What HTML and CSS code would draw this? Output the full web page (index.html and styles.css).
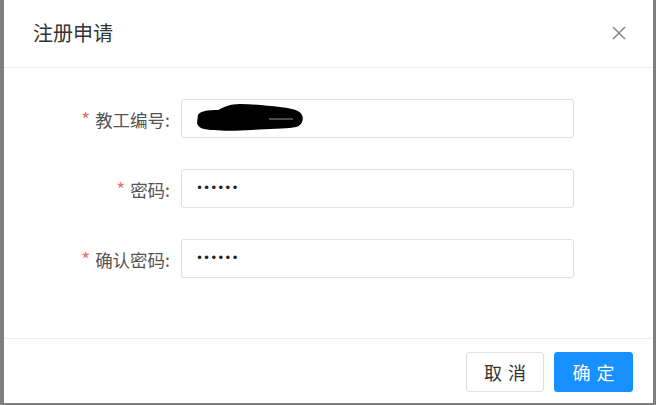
FILE: index.html
```html
<!DOCTYPE html>
<html lang="zh">
<head>
<meta charset="utf-8">
<title>注册申请</title>
<link rel="stylesheet" href="styles.css">
</head>
<body>
<div class="dialog">
  <div class="dialog-header">
    <span class="dialog-title">注册申请</span>
    <button class="close-btn" aria-label="关闭">
      <svg width="14" height="14" viewBox="0 0 14 14"><path d="M1 1L13 13M13 1L1 13" stroke="#8c8c8c" stroke-width="1.6" fill="none"/></svg>
    </button>
  </div>
  <div class="dialog-body">
    <div class="form-row">
      <label class="form-label"><span class="req">*</span>教工编号:</label>
      <div class="input">
        <svg class="redact" width="110" height="30" viewBox="0 0 110 30">
          <path d="M2 12 C4 8 12 7 22 7 C28 4 34 1 44 1 C58 1 72 3 84 4 C94 5 104 7 106 12 C108 17 106 22 100 24 C88 26 70 26 56 27 C40 28 26 28 18 27 C8 27 2 25 1 20 Z" fill="#000"/>
          <path d="M73 16 H97" stroke="#bbb" stroke-width="0.8"/>
        </svg>
      </div>
    </div>
    <div class="form-row">
      <label class="form-label"><span class="req">*</span>密码:</label>
      <div class="input"><span class="dots">••••••</span></div>
    </div>
    <div class="form-row">
      <label class="form-label"><span class="req">*</span>确认密码:</label>
      <div class="input"><span class="dots">••••••</span></div>
    </div>
  </div>
  <div class="dialog-footer">
    <button class="btn">取消</button>
    <button class="btn btn-primary">确定</button>
  </div>
</div>
</body>
</html>
```
FILE: styles.css
```css
* { box-sizing: border-box; }
html, body { margin: 0; padding: 0; }
body {
  width: 656px;
  height: 405px;
  background: #7f7f7f;
  font-family: "Noto Sans CJK SC", "Noto Sans", sans-serif;
  overflow: hidden;
}
.dialog {
  margin: 0 3px 0 4px;
  width: 649px;
  height: 403px;
  background: #fff;
  display: flex;
  flex-direction: column;
}
.dialog-header {
  height: 68px;
  border-bottom: 1px solid #ebeef5;
  display: flex;
  align-items: center;
  justify-content: space-between;
  padding: 0 27px 0 29px;
}
.dialog-title {
  font-size: 20px;
  color: #333;
  line-height: 1;
  margin-top: -2px;
}
.close-btn {
  border: 0;
  background: none;
  padding: 0;
  width: 14px;
  height: 14px;
  display: flex;
  margin-top: -2px;
}
.dialog-body {
  flex: 1;
  padding-top: 30px;
  display: flex;
  flex-direction: column;
  gap: 30px;
}
.form-row {
  display: flex;
  align-items: center;
  height: 40px;
}
.form-label {
  width: 177px;
  padding-right: 11px;
  text-align: right;
  font-size: 17.5px;
  color: #555;
}
.req {
  color: #f56c6c;
  margin-right: 5px;
  font-size: 19px;
}
.input {
  width: 393px;
  height: 39px;
  border: 1px solid #dcdfe6;
  border-radius: 3px;
  display: flex;
  align-items: center;
  padding-left: 14px;
}
.redact { display: block; margin-top: 0; }
.dots {
  font-family: "DejaVu Sans", sans-serif;
  font-size: 12px;
  letter-spacing: 0;
  color: #222;
}
.dialog-footer {
  height: 65px;
  border-top: 1px solid #ebeef5;
  display: flex;
  justify-content: flex-end;
  align-items: flex-start;
  gap: 10px;
  padding: 13px 20px 0 0;
}
.btn {
  width: 78px;
  height: 40px;
  border: 1px solid #dcdfe6;
  border-radius: 3px;
  background: #fff;
  color: #333;
  font-family: "Noto Sans CJK SC", sans-serif;
  font-size: 18px;
  letter-spacing: 6px;
  padding: 0 0 0 6px;
}
.btn-primary {
  width: 79px;
  background: #1890ff;
  border-color: #1890ff;
  color: #fff;
}
```
